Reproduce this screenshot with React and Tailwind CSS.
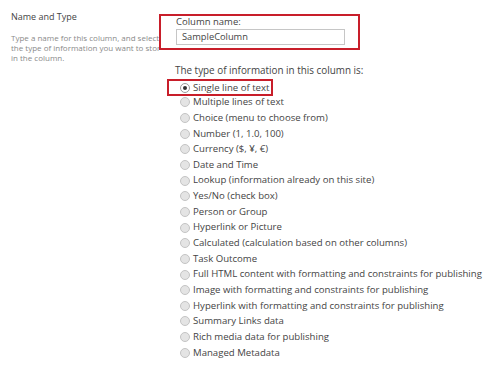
import React from 'react';

const types = [
  'Single line of text',
  'Multiple lines of text',
  'Choice (menu to choose from)',
  'Number (1, 1.0, 100)',
  'Currency ($, ¥, €)',
  'Date and Time',
  'Lookup (information already on this site)',
  'Yes/No (check box)',
  'Person or Group',
  'Hyperlink or Picture',
  'Calculated (calculation based on other columns)',
  'Task Outcome',
  'Full HTML content with formatting and constraints for publishing',
  'Image with formatting and constraints for publishing',
  'Hyperlink with formatting and constraints for publishing',
  'Summary Links data',
  'Rich media data for publishing',
  'Managed Metadata',
];

const Radio = ({ checked }) => (
  <span
    className={
      'inline-flex items-center justify-center w-[10px] h-[10px] rounded-full border shrink-0 ' +
      (checked ? 'border-[#9a9a9a] bg-white' : 'border-[#c4c4c4] bg-[#e4e4e4]')
    }
  >
    {checked && <span className="w-[4px] h-[4px] rounded-full bg-[#333]" />}
  </span>
);

export default function App() {
  return (
    <div
      className="w-[496px] h-[378px] bg-white overflow-hidden flex"
      style={{ fontFamily: '"Open Sans", "Noto Sans", sans-serif' }}
    >
      {/* Left description */}
      <div className="w-[159px] shrink-0 overflow-hidden pl-[11px] pt-[10px]">
        <div className="text-[9px] leading-[14px] text-[#444]">Name and Type</div>
        <div className="mt-[9px] text-[8px] leading-[10px] text-[#8a8a8a] whitespace-nowrap">
          <div>Type a name for this column, and select</div>
          <div>the type of information you want to store</div>
          <div>in the column.</div>
        </div>
      </div>

      {/* Right column */}
      <div className="flex-1 pt-[14px]">
        <div className="w-[201px] h-[36px] border-2 border-[#c81e2a] pl-[15px] pr-[13px]">
          <div className="text-[9.5px] leading-[11px] text-[#444]">Column name:</div>
          <div className="mt-[2px] h-[16px] border border-[#c6c6c6] flex items-center pl-[5px] text-[9.3px] text-[#444]">
            SampleColumn
          </div>
        </div>

        <div className="pl-[16px] mt-[13px] text-[9.9px] leading-[14px] text-[#444]">
          The type of information in this column is:
        </div>

        <div className="mt-[2px] text-[9.6px] text-[#444]">
          {types.map((t, i) =>
            i === 0 ? (
              <div
                key={t}
                className="ml-[8px] w-[106px] h-[17px] border-2 border-[#c81e2a] flex items-center gap-[3px] pl-[11px] -mb-[1.35px]"
              >
                <Radio checked />
                <span className="whitespace-nowrap leading-[13px]">{t}</span>
              </div>
            ) : (
              <div key={t} className="h-[15.65px] flex items-center gap-[3px] pl-[21px]">
                <Radio />
                <span className="whitespace-nowrap">{t}</span>
              </div>
            )
          )}
        </div>
      </div>
    </div>
  );
}
